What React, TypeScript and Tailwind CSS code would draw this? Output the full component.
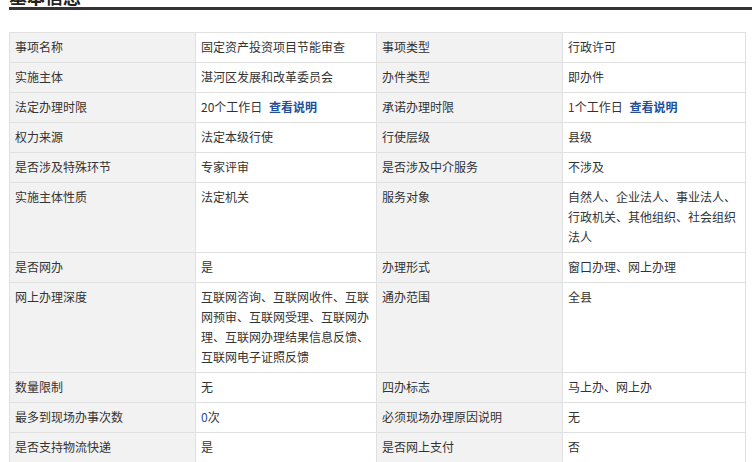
import React from 'react';

type Cell = React.ReactNode;

const link = <span className="font-bold text-[#1e4e9c] ml-1">查看说明</span>;

const rows: [Cell, Cell, Cell, Cell][] = [
  ['事项名称', '固定资产投资项目节能审查', '事项类型', '行政许可'],
  ['实施主体', '湛河区发展和改革委员会', '办件类型', '即办件'],
  ['法定办理时限', <>20个工作日 {link}</>, '承诺办理时限', <><span className="text-[#c00]">1</span>个工作日 {link}</>],
  ['权力来源', '法定本级行使', '行使层级', '县级'],
  ['是否涉及特殊环节', '专家评审', '是否涉及中介服务', '不涉及'],
  ['实施主体性质', '法定机关', '服务对象', '自然人、企业法人、事业法人、行政机关、其他组织、社会组织法人'],
  ['是否网办', '是', '办理形式', '窗口办理、网上办理'],
  ['网上办理深度', '互联网咨询、互联网收件、互联网预审、互联网受理、互联网办理、互联网办理结果信息反馈、互联网电子证照反馈', '通办范围', '全县'],
  ['数量限制', '无', '四办标志', '马上办、网上办'],
  ['最多到现场办事次数', <><span className="text-[#1e4e9c]">0</span>次</>, '必须现场办理原因说明', '无'],
  ['是否支持物流快递', '是', '是否网上支付', '否'],
];

export default function App() {
  return (
    <div className="w-[752px] h-[462px] overflow-hidden bg-white text-[12px] leading-[20px] text-[#333]" style={{ fontFamily: '"SimSun","Noto Sans CJK SC",sans-serif' }}>
      <div className="ml-[9px] mt-[-14px] border-b-[3px] border-[#333] h-[24px] text-[18px] font-bold text-[#222] leading-[20px]">基本信息</div>
      <table className="ml-[9px] mt-[22px] w-[736px] border-collapse table-fixed">
        <colgroup>
          <col className="w-[186px]" />
          <col className="w-[181px]" />
          <col className="w-[186px]" />
          <col className="w-[183px]" />
        </colgroup>
        <tbody>
          {rows.map((r, i) => (
            <tr key={i}>
              {r.map((c, j) => (
                <td
                  key={j}
                  className={`border border-[#e0e0e0] align-top px-[5px] pt-[4px] pb-[5px] h-[30px] [line-break:anywhere] ${j % 2 === 0 ? 'bg-[#f2f2f2]' : 'bg-white'}`}
                >
                  {c}
                </td>
              ))}
            </tr>
          ))}
        </tbody>
      </table>
    </div>
  );
}
